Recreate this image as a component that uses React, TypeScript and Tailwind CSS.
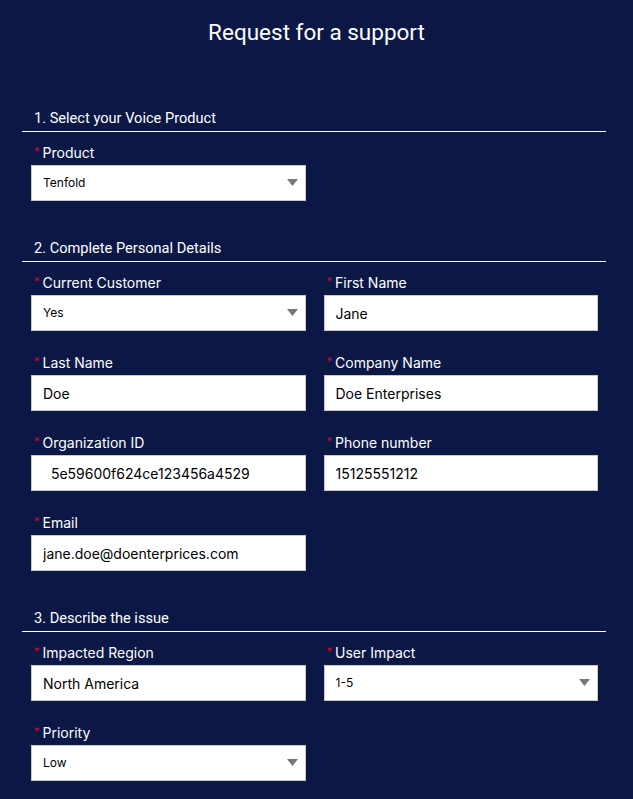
import React from "react";

type Field = {
  label: string;
  value: string;
  select?: boolean;
};

const SECTIONS: { title: string; fields: Field[] }[] = [
  {
    title: "1. Select your Voice Product",
    fields: [{ label: "Product", value: "Tenfold", select: true }],
  },
  {
    title: "2. Complete Personal Details",
    fields: [
      { label: "Current Customer", value: "Yes", select: true },
      { label: "First Name", value: "Jane" },
      { label: "Last Name", value: "Doe" },
      { label: "Company Name", value: "Doe Enterprises" },
      { label: "Organization ID", value: "  5e59600f624ce123456a4529" },
      { label: "Phone number", value: "15125551212" },
      { label: "Email", value: "jane.doe@doenterprices.com" },
    ],
  },
  {
    title: "3. Describe the issue",
    fields: [
      { label: "Impacted Region", value: "North America" },
      { label: "User Impact", value: "1-5", select: true },
      { label: "Priority", value: "Low", select: true },
    ],
  },
];

function FormField({ field }: { field: Field }) {
  return (
    <div className="flex flex-col">
      <label className="flex items-start h-5 mb-[2px] pl-[3px] text-[14px] leading-5 text-white">
        <span className="text-[#e3001b] text-[11px] leading-4 mr-[3px]">*</span>
        {field.label}
      </label>
      {field.select ? (
        <div className="relative">
          <select
            defaultValue={field.value}
            className="w-full h-[36px] appearance-none bg-white border border-[#c9c9c9] pl-[11px] text-[12px] text-black outline-none"
          >
            <option>{field.value}</option>
          </select>
          <svg className="pointer-events-none absolute right-[8px] top-[14px]" width="11" height="7" viewBox="0 0 11 7">
            <path d="M0 0 H11 L5.5 7 Z" fill="#777777" />
          </svg>
        </div>
      ) : (
        <input
          defaultValue={field.value}
          className="w-full h-[36px] bg-white border border-[#c9c9c9] px-[11px] text-[14px] text-black outline-none whitespace-pre"
        />
      )}
    </div>
  );
}

export default function App() {
  return (
    <div
      className="min-h-[799px] w-full bg-[#0b1846] pb-10"
      style={{ fontFamily: "Inter, 'Liberation Sans', sans-serif" }}
    >
      <h1
        className="pt-[18px] text-center text-[22.5px] leading-7 text-white"
        style={{ fontFamily: "Roboto, 'Liberation Sans', sans-serif" }}
      >
        Request for a support
      </h1>

      <div className="mt-[62px] ml-[22px] w-[584px] flex flex-col gap-[37px]">
        {SECTIONS.map((s) => (
          <section key={s.title}>
            <h2
              className="pl-[12px] pb-[3px] border-b border-white text-[14.6px] leading-5 text-white"
              style={{ fontFamily: "Roboto, 'Liberation Sans', sans-serif" }}
            >
              {s.title}
            </h2>
            <div className="mt-[11px] pl-[9px] pr-[8px] grid grid-cols-2 gap-x-[18px] gap-y-[22px]">
              {s.fields.map((f) => (
                <FormField key={f.label} field={f} />
              ))}
            </div>
          </section>
        ))}
      </div>
    </div>
  );
}
